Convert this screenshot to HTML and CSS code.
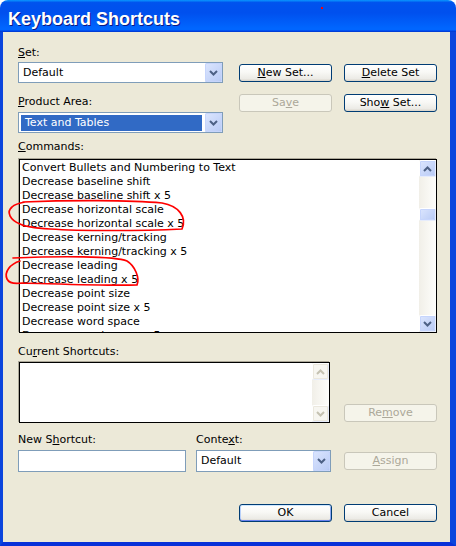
FILE: index.html
```html
<!DOCTYPE html>
<html lang="en">
<head>
    <meta charset="UTF-8">
    <meta name="viewport" content="width=device-width, initial-scale=1.0">
    <title>Keyboard Shortcuts</title>
    <link rel="stylesheet" href="styles.css">
</head>
<body>
    <div class="window">
        <div class="titlebar">
            <span class="title">Keyboard Shortcuts</span>
            <span class="speck"></span>
        </div>

        <div class="client">
            <div class="top">
                <div class="left-col">
                    <label class="lbl lbl-set"><u>S</u>et:</label>
                    <div class="combo">
                        <span class="combo-text">Default</span>
                        <span class="drop"><svg width="9" height="6" viewBox="0 0 9 6"><path d="M1 1 L4.5 4.5 L8 1"/></svg></span>
                    </div>
                    <label class="lbl lbl-area"><u>P</u>roduct Area:</label>
                    <div class="combo">
                        <span class="combo-text selected">Text and Tables</span>
                        <span class="drop"><svg width="9" height="6" viewBox="0 0 9 6"><path d="M1 1 L4.5 4.5 L8 1"/></svg></span>
                    </div>
                </div>
                <div class="btn-grid">
                    <button class="btn"><u>N</u>ew Set...</button>
                    <button class="btn"><u>D</u>elete Set</button>
                    <button class="btn" disabled>Sa<u>v</u>e</button>
                    <button class="btn">Sho<u>w</u> Set...</button>
                </div>
            </div>

            <label class="lbl lbl-cmd"><u>C</u>ommands:</label>
            <div class="listbox commands">
                <ul class="items">
                    <li>Convert Bullets and Numbering to Text</li>
                    <li>Decrease baseline shift</li>
                    <li>Decrease baseline shift x 5</li>
                    <li>Decrease horizontal scale</li>
                    <li>Decrease horizontal scale x 5</li>
                    <li>Decrease kerning/tracking</li>
                    <li>Decrease kerning/tracking x 5</li>
                    <li>Decrease leading</li>
                    <li>Decrease leading x 5</li>
                    <li>Decrease point size</li>
                    <li>Decrease point size x 5</li>
                    <li>Decrease word space</li>
                    <li>Decrease word space x 5</li>
                </ul>
                <div class="vscroll">
                    <span class="sb-btn"><svg width="9" height="6" viewBox="0 0 9 6"><path d="M1 5 L4.5 1.5 L8 5"/></svg></span>
                    <span class="sb-track"><span class="sb-thumb"></span></span>
                    <span class="sb-btn"><svg width="9" height="6" viewBox="0 0 9 6"><path d="M1 1 L4.5 4.5 L8 1"/></svg></span>
                </div>
            </div>

            <label class="lbl lbl-cur">Cu<u>r</u>rent Shortcuts:</label>
            <div class="current-row">
                <div class="listbox current">
                    <div class="items"></div>
                    <div class="vscroll off">
                        <span class="sb-btn"><svg width="9" height="6" viewBox="0 0 9 6"><path d="M1 5 L4.5 1.5 L8 5"/></svg></span>
                        <span class="sb-track"></span>
                        <span class="sb-btn"><svg width="9" height="6" viewBox="0 0 9 6"><path d="M1 1 L4.5 4.5 L8 1"/></svg></span>
                    </div>
                </div>
                <button class="btn remove" disabled>Re<u>m</u>ove</button>
            </div>

            <div class="bottom-row">
                <div class="field field-new">
                    <label class="lbl lbl-field">New S<u>h</u>ortcut:</label>
                    <input type="text" class="textbox">
                </div>
                <div class="field field-ctx">
                    <label class="lbl lbl-field">Conte<u>x</u>t:</label>
                    <div class="combo combo-tall">
                        <span class="combo-text">Default</span>
                        <span class="drop"><svg width="9" height="6" viewBox="0 0 9 6"><path d="M1 1 L4.5 4.5 L8 1"/></svg></span>
                    </div>
                </div>
                <button class="btn assign" disabled><u>A</u>ssign</button>
            </div>

            <div class="actions">
                <button class="btn btn-default">OK</button>
                <button class="btn">Cancel</button>
            </div>
        </div>

        <!-- hand-drawn red marks over the list -->
        <svg class="marks" width="456" height="546" viewBox="0 0 456 546">
            <path d="M23 202 C70 200, 130 200, 162 203 C179 206, 187 217, 182 229 C140 231, 80 231, 50 229 C35 228, 25 227, 20 224 C10 220, 6 212, 12 207 C15 204, 19 203, 25 202"/>
            <path d="M20 261 C10 264, 4 272, 7 279 C9 283, 15 284, 22 283 C60 284, 110 286, 137 285 C140 278, 135 266, 127 261 C115 256, 60 256, 13 258"/>
        </svg>
    </div>
</body>
</html>
```

FILE: styles.css
```css
* {
    box-sizing: border-box;
}

body {
    margin: 0;
    background: #fff;
    font-family: "DejaVu Sans", Verdana, sans-serif;
    font-size: 11px;
    color: #000;
}

.window {
    position: relative;
    width: 456px;
    height: 546px;
    display: flex;
    flex-direction: column;
}

.titlebar {
    position: relative;
    flex: none;
    height: 32px;
    padding: 9px 0 0 8px;
    border-radius: 8px 8px 0 0;
    background: linear-gradient(to bottom, #0997ff 0%, #0053ee 8%, #0050ee 40%, #0066ff 88%, #0066ff 93%, #005bff 95%, #003dd7 96%, #003dd7 100%);
}

.title {
    font-family: "Liberation Sans", Arial, sans-serif;
    font-weight: bold;
    font-size: 18px;
    line-height: 20px;
    color: #fff;
    text-shadow: 1px 1px 0 #0a1883;
}

.speck {
    position: absolute;
    left: 321px;
    top: 7px;
    width: 2px;
    height: 2px;
    background: #f00;
}

.client {
    flex: 1;
    background: #ece9d8;
    border: solid #0b45dd;
    border-width: 0 6px 4px 3px;
    border-bottom-color: #0831d9;
    padding: 14px 13px 0 15px;
}

/* labels */
.lbl {
    display: block;
    line-height: 13px;
}

.lbl-set {
    margin-bottom: 3px;
}

.lbl-area {
    margin-top: 12px;
    margin-bottom: 4px;
}

.lbl-cmd {
    margin-top: 7px;
    margin-bottom: 6px;
}

.lbl-cur {
    margin-top: 12px;
    margin-bottom: 3px;
}

.lbl-field {
    margin-bottom: 4px;
}

/* top part */
.top {
    display: flex;
    gap: 16px;
}

.left-col {
    width: 205px;
}

.combo {
    display: flex;
    height: 21px;
    border: 1px solid #7f9db9;
    background: #fff;
}

.combo-tall {
    height: 22px;
}

.combo-text {
    flex: 1;
    line-height: 19px;
    padding-left: 4px;
    white-space: nowrap;
}

.combo-tall .combo-text {
    line-height: 20px;
}

.combo-text.selected {
    margin: 2px 3px 1px 2px;
    line-height: 15px;
    background: #316ac5;
    color: #fff;
}

.drop {
    flex: none;
    width: 17px;
    display: flex;
    align-items: center;
    justify-content: center;
    border-radius: 2px;
    background: linear-gradient(135deg, #dce6fe, #b8caf5);
    box-shadow: inset 0 0 0 1px #c6d5fc, inset -1px -1px 0 #aec1ee;
}

.drop path, .sb-btn path {
    fill: none;
    stroke: #4d6185;
    stroke-width: 2;
}

.btn-grid {
    display: grid;
    grid-template-columns: 93px 93px;
    gap: 12px;
    margin-top: 18px;
    align-content: start;
}

/* buttons */
.btn {
    display: block;
    width: 93px;
    height: 18px;
    padding: 0;
    font: inherit;
    line-height: 16px;
    color: #000;
    text-align: center;
    border: 1px solid #003c74;
    border-radius: 3px;
    background: linear-gradient(to bottom, #fff 0%, #f8f8f5 45%, #ecebe6 85%, #d8d3c8 100%);
}

.btn:disabled {
    border-color: #c9c7ba;
    background: #f5f4ea;
    color: #aca899;
}

.btn-default {
    box-shadow: inset 0 1px 0 #cee7ff, inset 0 -1px 0 #6982ee, inset 1px 0 0 #b8d0f9, inset -1px 0 0 #8ca8f0;
}

/* list boxes */
.listbox {
    display: flex;
    margin-left: 1px;
    border: 1px solid #000;
    background: #fff;
    box-shadow: -1px -1px 0 #aca899;
}

.commands {
    width: 418px;
    height: 174px;
}

.items {
    flex: 1;
    margin: 0;
    padding: 1px 0 0 2px;
    list-style: none;
    overflow: hidden;
    line-height: 14px;
    white-space: nowrap;
}

.vscroll {
    flex: none;
    width: 17px;
    display: flex;
    flex-direction: column;
    background: linear-gradient(to right, #f1efe8, #fefefb);
}

.sb-btn, .sb-thumb {
    display: flex;
    align-items: center;
    justify-content: center;
    height: 17px;
    border-radius: 2px;
    background: linear-gradient(135deg, #dce6fe, #b8caf5);
    box-shadow: inset 0 0 0 1px #c6d5fc, inset -1px -1px 0 #aec1ee;
    border: 1px solid #fff;
    border-right-color: #e6ecfb;
    border-bottom-color: #e6ecfb;
}

.sb-track {
    flex: 1;
}

.sb-thumb {
    height: 13px;
    margin-top: 31px;
}

.off .sb-btn {
    background: #f7f6f1;
    box-shadow: inset 0 0 0 1px #ebe8de;
}

.off .sb-btn path {
    stroke: #c5c2b2;
}

.current-row {
    display: flex;
    align-items: flex-end;
    justify-content: space-between;
}

.current {
    width: 311px;
    height: 61px;
    margin-top: 1px;
}

.remove {
    margin-bottom: 1px;
}

/* bottom */
.bottom-row {
    display: flex;
    align-items: flex-end;
    margin-top: 10px;
}

.field-new {
    width: 168px;
}

.field-ctx {
    width: 135px;
    margin-left: 10px;
}

.textbox {
    display: block;
    width: 168px;
    height: 22px;
    margin: 0;
    padding: 0 3px;
    font: inherit;
    border: 1px solid #7f9db9;
    background: #fff;
}

.assign {
    margin-left: auto;
    margin-bottom: 2px;
}

.actions {
    display: flex;
    justify-content: flex-end;
    gap: 12px;
    margin-top: 32px;
}

.marks {
    position: absolute;
    left: 0;
    top: 0;
    pointer-events: none;
}

.marks path {
    fill: none;
    stroke: #f00;
    stroke-width: 1.7;
    stroke-linecap: round;
}
```
